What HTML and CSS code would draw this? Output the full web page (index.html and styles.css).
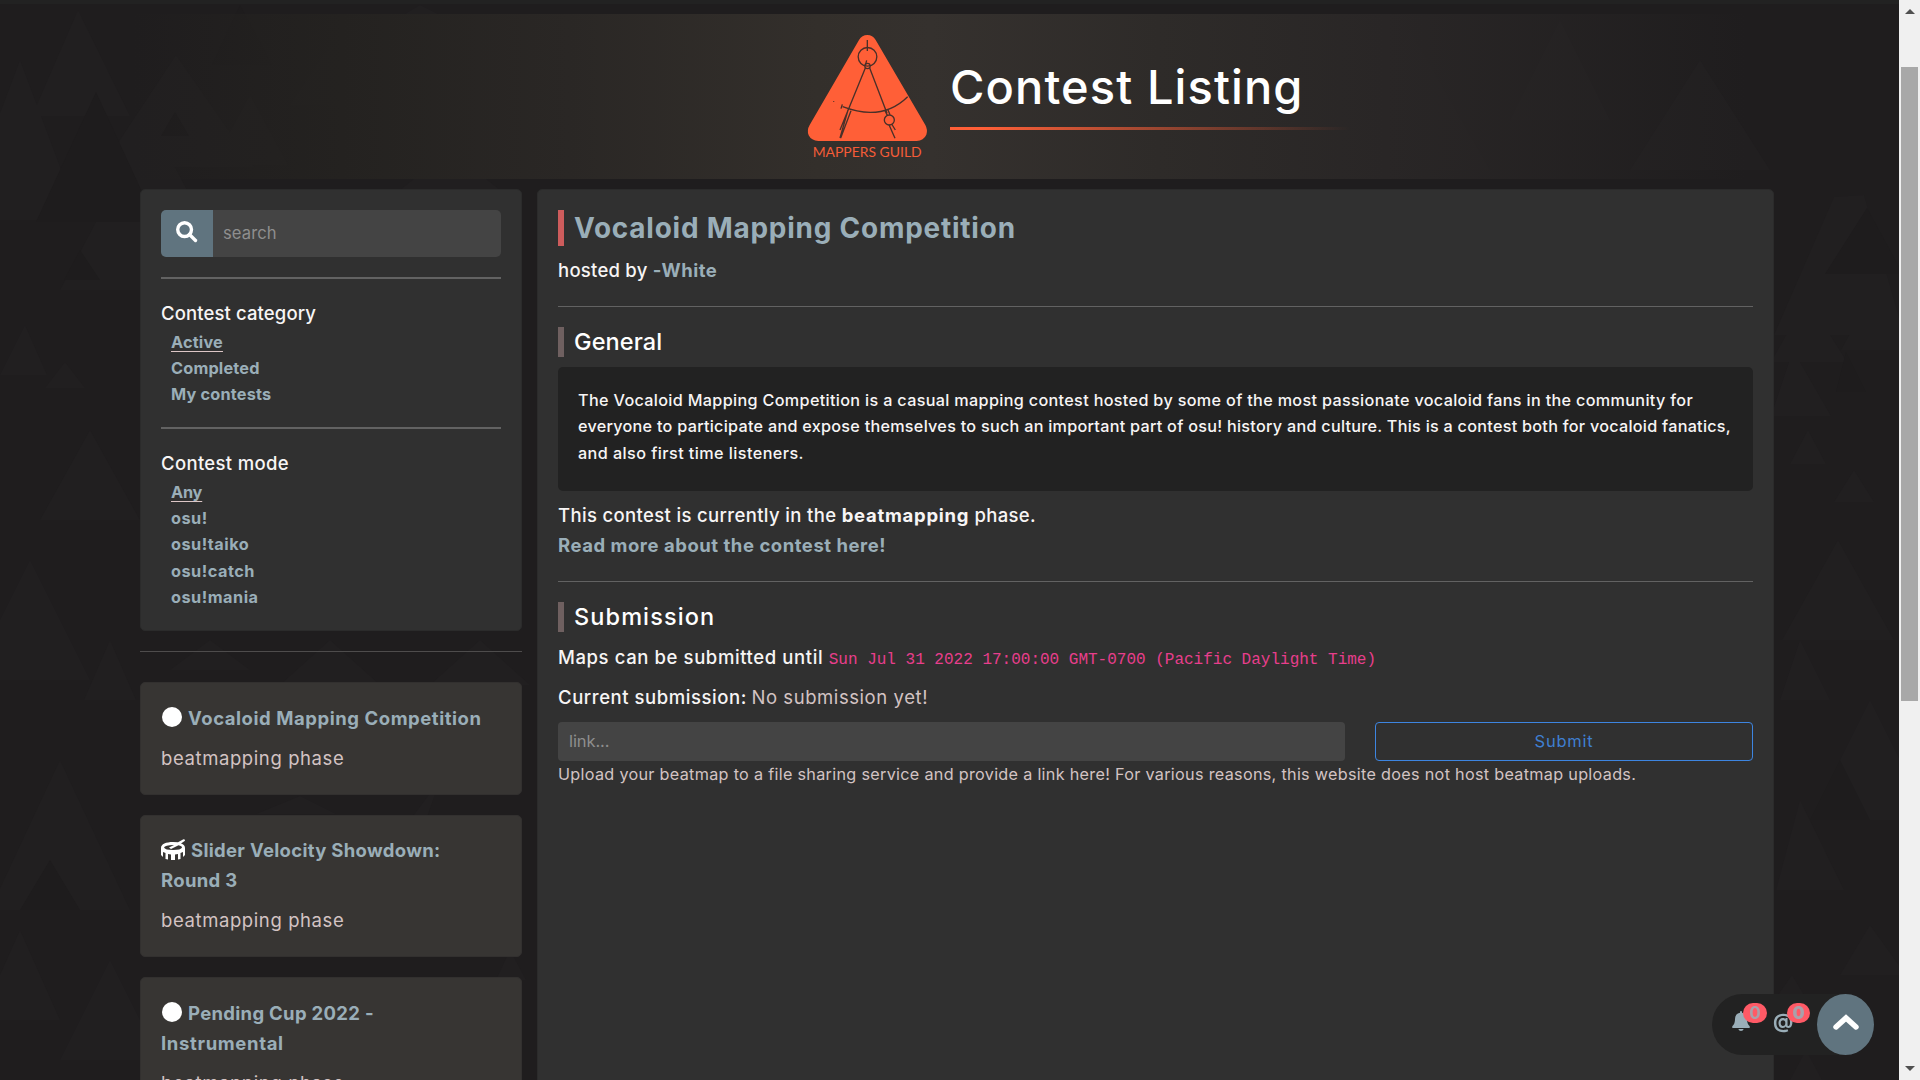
FILE: index.html
```
<!DOCTYPE html>
<html lang="en">
<head>
<meta charset="utf-8">
<title>Contest Listing</title>
<link rel="stylesheet" href="styles.css">
</head>
<body>
<svg class="backdrop" viewBox="0 0 1900 1080" aria-hidden="true">
  <g class="tri-light">
    <path d="M78 10l52 106H32zM20 60l60 160H-40zM176 55l78 112H102zM250 95l38 70h-76zM420 5l60 30h-110zM330 45l40 60h-80zM150 120l90 170H60zM25 325l22 50H0zM65 362l20 26H45zM90 430l50 90H40zM30 560l60 120H-30zM110 640l26 60H84zM60 760l70 150H-10zM20 930l40 90h-80zM110 960l50 100H60z"/>
    <path d="M450 150l50 40H400zM560 90l40 80h-80zM700 60l50 110H650zM1050 130l30 40h-60zM1270 20l60 90h-120zM1410 30l80 140h-160zM1560 20l50 100h-100zM1700 60l70 110h-140z"/>
    <path d="M1864 195l40 140h-130l60-138zM1807 298l40 64h-76zM1877 285l40 65h-76zM1793 350l38 66h-60zM1808 430l18 34h-36zM1854 470l20 32h-40zM1838 540l56 100h-112zM1800 640l30 60h-50zM1870 700l60 120h-120zM1800 800l44 90h-68zM1792 975l12 20h-26zM1870 925l36 50h-66zM1806 1050l16 30h-32z"/>
    <path d="M210 640l40 30h-80zM330 640l50 45h-100zM480 640l50 45h-100zM300 796l36 18h-80zM440 780l-30 40h16zM510 950l16 30h-30z"/>
  </g>
  <g class="tri-dark">
    <path d="M96 92l60 130H36zM175 112l14 24h-28zM1867 208l36 66h-78zM1846 352l20 40h-30zM80 250l20 30H64zM1840 760l30 60h-60zM50 860l30 50H20zM240 5l32 60h-60z"/>
  </g>
</svg>
<div class="navbar-edge"></div>
<header class="banner">
  <svg class="logo" viewBox="0 0 420 408">
    <path class="logo-body" d="M177 36Q186 21 202 21T227 36L376 291Q384 306 379 320Q371 338 350 339H55Q34 338 26 322Q20 306 29 291Z"/>
    <g class="logo-lines">
      <path d="M202 36V69M200 97L196 112M196 120L120 306M144 246L120 330M153 248L122 330M209 120L261 256M254 246L262 262M263 244L270 260M267 290L285 331M275 288L286 306"/>
      <circle cx="202.500" cy="86.500" r="28"/>
      <circle cx="202.500" cy="114" r="8"/>
      <circle cx="268" cy="276" r="15"/>
      <path d="M128 236C190 260 260 268 323 206M127 229L123 242M101 219v2"/>
    </g>
    <text x="38" y="388" textLength="327" lengthAdjust="spacingAndGlyphs">MAPPERS GUILD</text>
  </svg>
  <div class="banner-title">
    <h1>Contest Listing</h1>
    <div class="banner-rule"></div>
  </div>
</header>
<main class="columns">
  <aside class="sidebar">
    <section class="filters">
      <div class="search">
        <span class="search-button"><svg viewBox="0 0 22 22"><circle cx="8.600" cy="8.600" r="6.900"/><path d="M13.500 13.500L19.500 19.500"/></svg></span>
        <span class="search-field">search</span>
      </div>
      <hr>
      <h4>Contest category</h4>
      <ul class="options category">
        <li><a class="selected">Active</a></li>
        <li><a>Completed</a></li>
        <li><a>My contests</a></li>
      </ul>
      <hr>
      <h4 class="mode-heading">Contest mode</h4>
      <ul class="options modes">
        <li><a class="selected any">Any</a></li>
        <li><a>osu!</a></li>
        <li><a>osu!taiko</a></li>
        <li><a>osu!catch</a></li>
        <li><a>osu!mania</a></li>
      </ul>
    </section>
    <hr class="sidebar-rule">
    <article class="contest">
      <h5 class="wide"><i class="dot"></i>Vocaloid Mapping Competition</h5>
      <p>beatmapping phase</p>
    </article>
    <article class="contest second">
      <h5><svg class="drum" viewBox="0 0 24 21"><path d="M0 9C0 5 5 3 12 3L17 3.300L22 .4Q24 0 24 1.800L20 4.600Q24 6 24 9V16L22 18V13L19.500 14V20L17 20.600V15L14 15.500V21H10V15.500L7 15V20.600L4.500 20V14L2 13V18L0 16Z"/><path class="drum-skin" d="M3 8.500Q4 5.800 13 5.900L8 8.600L10 10L17.500 6.300Q21 7 21 8.500Q20 11 12 11T3 8.500Z"/></svg>Slider Velocity Showdown:<br>Round 3</h5>
      <p>beatmapping phase</p>
    </article>
    <article class="contest">
      <h5><i class="dot"></i>Pending Cup 2022 -<br><span class="loose">Instrumental</span></h5>
      <p>beatmapping phase</p>
    </article>
  </aside>
  <section class="detail">
    <h2><a>Vocaloid Mapping Competition</a></h2>
    <p class="host">hosted by <a>-White</a></p>
    <hr>
    <h3 class="general">General</h3>
    <div class="description">
      <div class="line-a">The Vocaloid Mapping Competition is a casual mapping contest hosted by some of the most passionate vocaloid fans in the community for</div>
      <div class="line-b">everyone to participate and expose themselves to such an important part of osu! history and culture. This is a contest both for vocaloid fanatics,</div>
      <div class="line-c">and also first time listeners.</div>
    </div>
    <p class="phase">This contest is currently in the <b>beatmapping</b> phase.</p>
    <p><a class="read-more">Read more about the contest here!</a></p>
    <hr class="submission-rule">
    <h3 class="submission">Submission</h3>
    <p class="deadline">Maps can be submitted until <code>Sun Jul 31 2022 17:00:00 GMT-0700 (Pacific Daylight Time)</code></p>
    <p class="current">Current submission: <span>No submission yet!</span></p>
    <div class="upload">
      <span class="link-field">link...</span>
      <button>Submit</button>
    </div>
    <p class="hint">Upload your beatmap to a file sharing service and provide a link here! For various reasons, this website does not host beatmap uploads.</p>
  </section>
</main>
<div class="dock">
  <div class="dock-item">
    <svg class="bell" viewBox="0 0 18 20"><path d="M8 1Q8 0 9 0T10 1V1.700Q15 2.800 15 8Q15 13 17.500 15Q18.500 17 17 17H1Q-.5 17 .5 15Q3 13 3 8Q3 2.800 8 1.700ZM6.300 18H11.700Q11 20 9 20T6.300 18Z"/></svg>
    <b class="badge">0</b>
  </div>
  <div class="dock-item at"><span>@</span><b class="badge">0</b></div>
  <div class="to-top"><svg viewBox="0 0 26 16"><path d="M3 13L13 4L23 13"/></svg></div>
</div>
<div class="scrollbar"><i class="arrow-up"></i><i class="thumb"></i><i class="arrow-down"></i></div>
</body>
</html>
```
FILE: styles.css
```
* { box-sizing: border-box; margin: 0; padding: 0; }
html, body { height: 1080px; overflow: hidden; }
body {
  background: #1f1d1e;
  color: #f7f5f5;
  font: 450 18.5px/30px Inter, "Liberation Sans", sans-serif;
  letter-spacing: .38px;
  padding-right: 21px;
  white-space: nowrap;
}
a { color: #9aaeb8; font-weight: 700; }
hr { border: 0; height: 1px; background: #626262; }
ul { list-style: none; }

.backdrop { position: absolute; left: 0; top: 0; width: 1900px; height: 1080px; z-index: -1; }
.tri-light { fill: #211f20; }
.tri-dark { fill: #1e1c1d; }

.navbar-edge { height: 4px; background: #222; }
.banner {
  display: flex;
  margin-top: 10px;
  height: 165px;
  padding: 14px 0 0 800px;
  gap: 10px;
  background: linear-gradient(90deg, transparent 7%, #242220 18%, #2a2725 30%, #332f2b 43%, #35312e 49%, #2e2b29 61%, #292626 73%, transparent 92%);
}
.logo { width: 140px; height: 136px; }
.logo-body { fill: #ff5f37; }
.logo-lines { fill: none; stroke: #4a3029; stroke-width: 4; }
.logo text { font: 39px Lato, sans-serif; letter-spacing: 0; fill: #f55c38; }
.banner-title { padding-top: 31px; }
h1 { font-size: 47px; font-weight: 500; line-height: 56px; letter-spacing: 1.1px; color: #fff; }
.banner-rule { width: 400px; height: 3px; margin-top: 12px; background: linear-gradient(90deg, #ff5f37 8%, transparent); }

.columns { display: flex; gap: 15px; margin-top: 10px; padding-left: 140px; height: 891px; overflow: hidden; }
.sidebar { width: 382px; }
.filters { height: 442px; padding: 20px; background: #303030; border: 1px solid #2b2b2b; border-radius: 5px; }
.search { display: flex; height: 47px; margin-bottom: 20px; border-radius: 5px; overflow: hidden; line-height: 47px; }
.search-button { width: 52px; background: #60747f; display: flex; align-items: center; justify-content: center; }
.search-button svg { width: 22px; height: 22px; fill: none; stroke: #fff; stroke-width: 3.4; stroke-linecap: round; margin-bottom: 3px; }
.search-field { flex: 1; padding-left: 10px; background: #444; color: #8e8e8e; font-size: 16.6px; font-weight: 400; letter-spacing: .1px; }
.filters hr { height: 2px; margin-bottom: 20px; }
h4 { font-size: 18.5px; font-weight: 450; line-height: 29.4px; letter-spacing: .12px; }
.mode-heading { letter-spacing: .34px; }
.options { padding-left: 10px; font-size: 16.3px; line-height: 26.2px; letter-spacing: .18px; }
.category { margin-bottom: 20px; }
.modes { line-height: 26.4px; letter-spacing: .5px; }
.selected { position: relative; top: 1px; text-decoration: underline 1px #dcc6c6; text-underline-offset: 3px; text-decoration-skip-ink: none; }
.any { letter-spacing: -.2px; }
.sidebar-rule { margin: 20px 0 30px; background: #4e4c4c; }
.contest { min-height: 113px; margin-bottom: 20px; padding: 20px; background: #373533; border: 1px solid #32302f; border-radius: 5px; }
.second { height: 142px; padding-top: 19px; }
h5 { font-size: 18.5px; line-height: 30px; font-weight: 700; color: #9aaeb8; letter-spacing: .31px; margin-bottom: 10px; }
h5.wide { letter-spacing: .55px; }
.loose { letter-spacing: .65px; }
.contest p { color: #d3c3c3; font-weight: 400; letter-spacing: .6px; }
.dot { display: inline-block; width: 20px; height: 20px; margin: 0 6px 0 1px; border-radius: 50%; background: #fff; vertical-align: -2px; }
.drum { width: 24px; height: 21px; margin-right: 6px; fill: #fff; vertical-align: -3px; }
.drum-skin { fill: #373533; }

.detail { width: 1237px; height: 920px; padding: 20px; background: #303030; border: 1px solid #2b2b2b; border-radius: 5px; }
h2 { height: 36px; border-left: 6px solid #cd5c5c; padding-left: 10px; font-size: 27.9px; line-height: 36px; letter-spacing: .8px; }
.host { margin: 9px 0 21px; letter-spacing: .25px; }
.host a { letter-spacing: .5px; }
h3 { height: 30px; border-left: 6px solid #6f6060; padding-left: 10px; margin: 20px 0 10px; font-size: 23.5px; font-weight: 500; color: #fff; }
.general { letter-spacing: .1px; }
.submission { letter-spacing: 1.1px; }
.description { height: 124px; margin-bottom: 9px; padding: 20px; background: #222; border-radius: 5px; font-size: 16.2px; line-height: 26.4px; }
.line-a { letter-spacing: .33px; }
.line-b { letter-spacing: .27px; }
.line-c { letter-spacing: .43px; }
.phase { letter-spacing: .35px; }
.phase b { letter-spacing: .72px; }
.read-more { letter-spacing: .53px; }
.submission-rule { margin-top: 21px; }
.deadline { letter-spacing: .6px; }
code { font: 16px "Liberation Mono", monospace; letter-spacing: 0; color: #e83e8c; }
.current { margin-top: 10px; letter-spacing: .56px; }
.current span { color: #d3c3c3; font-weight: 400; letter-spacing: .57px; margin-left: -1px; }
.upload { display: flex; gap: 30px; margin-top: 10px; height: 39px; line-height: 37px; font-size: 16.5px; font-weight: 400; }
.link-field { width: 787px; padding: 1px 0 0 11px; background: #444; border-radius: 4px; color: #8e8e8e; letter-spacing: -.1px; }
button { flex: 1; background: none; border: 1px solid #3d85e0; border-radius: 4px; color: #3f7fd0; font: inherit; letter-spacing: .75px; }
.hint { font-size: 16.2px; line-height: 26px; font-weight: 400; letter-spacing: .3px; color: #d3c3c3; }

.dock { position: fixed; left: 1712px; top: 994px; width: 162px; height: 61px; padding-left: 20px; display: flex; background: #222; border-radius: 31px; color: #9aaeb8; }
.dock-item { position: relative; width: 41px; padding-top: 17px; }
.bell { display: block; width: 18px; height: 20px; fill: #9aaeb8; }
.at { width: 44px; font-size: 20px; font-weight: 700; line-height: 20px; letter-spacing: 0; }
.badge { position: absolute; left: 11px; top: 9px; width: 24px; height: 20px; border-radius: 10px; background: #ff5a66; color: #a9a0aa; text-align: center; font-size: 17px; line-height: 21px; letter-spacing: 0; }
.at .badge { left: 14px; width: 23px; }
.to-top { width: 57px; height: 61px; border-radius: 50%; background: #60747f; display: flex; justify-content: center; align-items: center; }
.to-top svg { width: 26px; height: 16px; fill: none; stroke: #fff; stroke-width: 5.4; stroke-linecap: round; margin-bottom: 5px; }

.scrollbar { position: fixed; right: 0; top: 0; width: 21px; height: 1080px; background: #f0f0f0; display: flex; flex-direction: column; align-items: center; }
.arrow-up, .arrow-down { border: 5px solid transparent; width: 0; height: 0; }
.arrow-up { border-top: 0; border-bottom-color: #505050; margin-top: 9px; }
.thumb { width: 17px; height: 634px; margin-top: 53px; background: #a8a8a8; }
.arrow-down { border-bottom: 0; border-top-color: #505050; margin-top: 365px; }
```
